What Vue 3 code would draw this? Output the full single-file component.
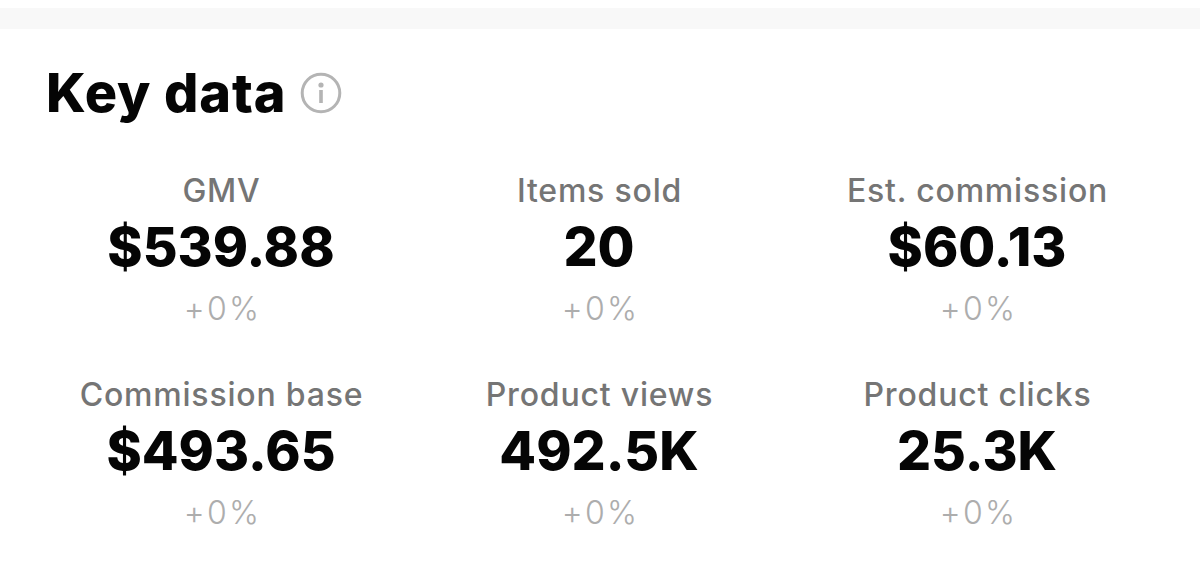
<script setup>
const stats = [
  { label: 'GMV', value: '$539.88', change: '+0%' },
  { label: 'Items sold', value: '20', change: '+0%' },
  { label: 'Est. commission', value: '$60.13', change: '+0%' },
  { label: 'Commission base', value: '$493.65', change: '+0%' },
  { label: 'Product views', value: '492.5K', change: '+0%' },
  { label: 'Product clicks', value: '25.3K', change: '+0%' },
]
</script>

<template>
  <div class="page">
    <div class="band"></div>
    <section class="card">
      <div class="head">
        <h2>Key data</h2>
        <svg class="info" width="42" height="42" viewBox="0 0 42 42" fill="none">
          <circle cx="21" cy="21" r="18.8" stroke="#b4b4b4" stroke-width="3" />
          <circle cx="21" cy="13" r="2.6" fill="#b4b4b4" />
          <rect x="19.2" y="18" width="3.6" height="13" fill="#b4b4b4" />
        </svg>
      </div>
      <div class="grid">
        <div v-for="s in stats" :key="s.label" class="stat">
          <div class="label">{{ s.label }}</div>
          <div class="value">{{ s.value }}</div>
          <div class="change">{{ s.change }}</div>
        </div>
      </div>
    </section>
  </div>
</template>

<style>
html, body { background: #fff; }
</style>

<style scoped>
.page {
  height: 564px;
  overflow: hidden;
  padding-top: 8px;
  box-sizing: border-box;
  background: #fff;
  font-family: Inter, "Liberation Sans", sans-serif;
}
.band { height: 21px; background: #f8f8f8; }
.card { padding: 29px 34px 0 32px; }
.head { display: flex; align-items: center; gap: 13px; padding-left: 14px; height: 70px; }
h2 { margin: 0; font-size: 54px; line-height: 70px; letter-spacing: 0.9px; font-weight: 800; color: #050505; }
.grid { display: grid; grid-template-columns: repeat(3, 378px); row-gap: 46px; margin-top: 43px; }
.stat { display: flex; flex-direction: column; align-items: center; }
.label { font-size: 32px; line-height: 40px; letter-spacing: 0.8px; font-weight: 500; color: #757575; padding-left: 1px; }
.value { font-size: 53.5px; line-height: 62px; margin-top: 5px; font-weight: 800; color: #050505; }
.change { font-size: 32px; line-height: 40px; letter-spacing: 2.2px; margin-top: 11px; padding-left: 3px; font-weight: 300; color: #adadad; }
</style>
